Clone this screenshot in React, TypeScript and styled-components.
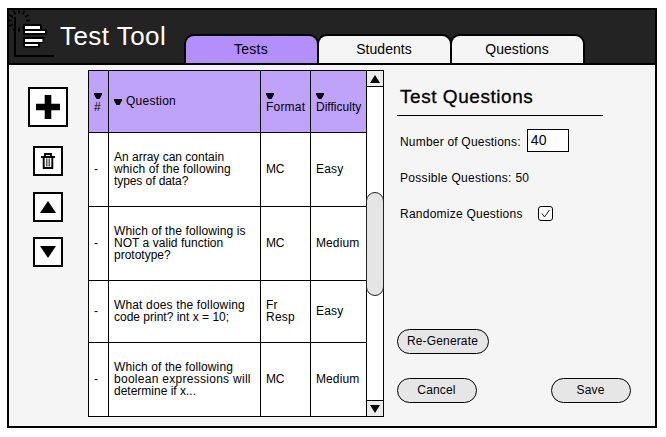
import React, { useState } from "react";
import styled, { createGlobalStyle } from "styled-components";

const Global = createGlobalStyle`
  * { box-sizing: border-box; }
  body { margin: 0; background: #fff; color: #000; font-family: "Liberation Sans", Arial, sans-serif; font-size: 12px; }
  svg { display: block; flex: none; }
`;

const Frame = styled.div`
  width: 650px;
  height: 420px;
  margin: 8px 0 0 7px;
  border: 2px solid #000;
  background: #f5f5f5;
  display: flex;
  flex-direction: column;
`;

const Header = styled.header`
  height: 55px;
  flex: none;
  display: flex;
  background: #232323;
  border-bottom: 2px solid #000;
`;

const AppTitle = styled.h1`
  margin: 0 0 0 5px;
  width: 124px;
  font-size: 26px;
  font-weight: 400;
  line-height: 52px;
  color: #fff;
  white-space: nowrap;
  letter-spacing: 0.45px;
`;

const TabList = styled.nav`
  display: flex;
  align-items: flex-end;
`;

const Tab = styled.button<{ $active?: boolean; $track: number }>`
  width: 135px;
  height: 29px;
  margin: 0 -2px 0 0;
  padding: 0 1px 1px 0;
  border: 2px solid #000;
  border-bottom: 0;
  border-radius: 10px 10px 0 0;
  background: ${(p) => (p.$active ? "#b28ffa" : "#f5f5f5")};
  color: #000;
  font: 14px "Liberation Sans", Arial, sans-serif;
  letter-spacing: ${(p) => p.$track}px;
`;

const Body = styled.main`
  flex: 1;
  display: flex;
`;

const Toolbar = styled.div`
  width: 79px;
  padding: 22px 1px 0 0;
  display: flex;
  flex-direction: column;
  align-items: center;
`;

const ToolButton = styled.button<{ $size: number; $gap: number }>`
  width: ${(p) => p.$size}px;
  height: ${(p) => p.$size}px;
  margin: 0 0 ${(p) => p.$gap}px;
  padding: 0;
  border: 2px solid #000;
  background: #fff;
  display: flex;
  align-items: center;
  justify-content: center;
`;

const TablePane = styled.section`
  width: 296px;
  height: 347px;
  margin-top: 5px;
  border: 1px solid #000;
  background: #fff;
  display: flex;
`;

const Grid = styled.div`
  width: 278px;
  flex: none;
`;

const Row = styled.div<{ $height: number; $head?: boolean }>`
  display: grid;
  grid-template-columns: 20px 152px 50px 56px;
  height: ${(p) => p.$height}px;
  background: ${(p) => (p.$head ? "#bfa2f9" : "#fff")};
  &:not(:last-child) { border-bottom: 1px solid #000; }
`;

const Cell = styled.div`
  border-right: 1px solid #000;
  padding: 0 0 2px 5px;
  display: flex;
  flex-direction: column;
  justify-content: center;
  align-items: flex-start;
  min-width: 0;
`;

const HeadCell = styled(Cell)`
  padding-bottom: 0;
  padding-top: 3px;
  gap: 2px;
`;

const WideHeadCell = styled(Cell)`
  flex-direction: row;
  justify-content: flex-start;
  align-items: center;
  gap: 4px;
  svg { margin-top: 3px; }
`;

const Line = styled.span<{ $track?: number }>`
  line-height: 12px;
  white-space: nowrap;
  letter-spacing: ${(p) => p.$track ?? 0.2}px;
`;

const Scroll = styled.div`
  width: 16px;
  display: flex;
  flex-direction: column;
`;

const ScrollArrow = styled.button<{ $down?: boolean }>`
  height: 16px;
  flex: none;
  padding: 0;
  border: 0 solid #000;
  border-width: ${(p) => (p.$down ? "1px 0 0" : "0 0 1px")};
  background: #ececec;
  display: flex;
  align-items: center;
  justify-content: center;
`;

const Track = styled.div`
  flex: 1;
  padding-top: 105px;
`;

const Thumb = styled.div`
  width: 18px;
  height: 104px;
  margin-left: -1px;
  border: 1px solid #222;
  border-radius: 9px;
  background: #e5e5e5;
`;

const Panel = styled.section`
  width: 206px;
  margin-left: 13px;
  display: flex;
  flex-direction: column;
`;

const PanelTitle = styled.h2`
  margin: 0;
  height: 51px;
  flex: none;
  padding: 21px 0 0 3px;
  border-bottom: 1px solid #000;
  font-size: 19px;
  font-weight: 400;
  line-height: 22px;
  letter-spacing: 0.55px;
  -webkit-text-stroke: 0.3px #000;
`;

const Field = styled.label<{ $height: number }>`
  height: ${(p) => p.$height}px;
  flex: none;
  padding-left: 3px;
  display: flex;
  align-items: center;
`;

const CountInput = styled.input`
  width: 42px;
  height: 23px;
  margin: -3px 0 0 6px;
  padding: 0 3px 1px;
  border: 1px solid #000;
  border-radius: 0;
  background: #fff;
  font: 14px "Liberation Sans", Arial, sans-serif;
  letter-spacing: 0.2px;
`;

const Check = styled.span`
  width: 15px;
  height: 15px;
  margin: -2px 0 0 15px;
  border: 1px solid #000;
  border-radius: 3px;
  background: #fff;
`;

const Actions = styled.div`
  width: 234px;
  margin-top: 24px;
  display: flex;
  justify-content: space-between;
`;

const Spacer = styled.div`
  height: 89px;
  flex: none;
`;

const Pill = styled.button<{ $width: number }>`
  width: ${(p) => p.$width}px;
  height: 25px;
  flex: none;
  padding: 0 1px 2px 0;
  border: 1px solid #000;
  border-radius: 13px;
  background: #e6e6e6;
  color: #000;
  font: 12px "Liberation Sans", Arial, sans-serif;
  letter-spacing: 0.15px;
`;

const Logo = () => (
  <svg width="46" height="50" viewBox="9 10 46 50">
    <g stroke="#000" strokeWidth="1.8" fill="none">
      <path d="M15 17V56H54" strokeWidth="2" />
      {Array.from({ length: 12 }, (_, i) => (
        <path key={i} d="M19 13.5V9.3" transform={`rotate(${i * 30} 19 20.5)`} />
      ))}
    </g>
    <path d="M23.3 24H41L42 26V29.5H47V34.7H23.3ZM23.3 37H44.7L43 43H39.7V47.5H23.3Z" fill="#000" />
    <path d="M25 26H40V29H25ZM25 31H45V33H25ZM25 39H42.5V42H25ZM25 44H38V46H25Z" fill="#fff" />
  </svg>
);

const Triangle = ({ w, h, up }: { w: number; h: number; up?: boolean }) => (
  <svg width={w} height={h} viewBox="0 0 10 10" preserveAspectRatio="none">
    <path d={up ? "M0 10H10L5 0Z" : "M0 0H10L5 10Z"} />
  </svg>
);

const SortMark = () => (
  <svg width="8" height="6" viewBox="0 0 8 6">
    <path d="M0 0H8V1.5L5.5 6H2.5L0 1.5Z" />
  </svg>
);

const PlusIcon = () => (
  <svg width="24" height="24" viewBox="0 0 24 24">
    <path d="M8.7 0H15.3V8.7H24V15.3H15.3V24H8.7V15.3H0V8.7H8.7Z" />
  </svg>
);

const TrashIcon = () => (
  <svg width="14" height="16" viewBox="0 0 14 16">
    <path d="M4 3.5V1H10V3.5M0 4H14M2.7 4V15H11.3V4" fill="none" stroke="#000" strokeWidth="1.9" />
    <path d="M5.5 5.5V13.5M7 5.5V13.5M8.5 5.5V13.5" stroke="#444" strokeWidth="0.9" />
  </svg>
);

type Piece = [string, number];
const rows: { height: number; question: Piece[]; format: Piece[]; level: Piece }[] = [
  {
    height: 74,
    question: [["An array can contain", 0.0], ["which of the following", 0.13], ["types of data?", -0.08]],
    format: [["MC", -0.2]],
    level: ["Easy", 0.2],
  },
  {
    height: 74,
    question: [["Which of the following is", 0.12], ["NOT a valid function", 0.04], ["prototype?", 0]],
    format: [["MC", -0.2]],
    level: ["Medium", 0.1],
  },
  {
    height: 62,
    question: [["What does the following", 0.15], ["code print? int x = 10;", 0]],
    format: [["Fr", 0.2], ["Resp", 0.25]],
    level: ["Easy", 0.2],
  },
  {
    height: 73,
    question: [["Which of the following", 0.1], ["boolean expressions will", 0.28], ["determine if x...", 0]],
    format: [["MC", -0.2]],
    level: ["Medium", 0.1],
  },
];

const Lines = ({ items }: { items: Piece[] }) => (
  <>
    {items.map(([text, track]) => (
      <Line key={text} $track={track}>{text}</Line>
    ))}
  </>
);

export default function App() {
  const [count, setCount] = useState("40");
  return (
    <>
      <Global />
      <Frame>
        <Header>
          <Logo />
          <AppTitle>Test Tool</AppTitle>
          <TabList>
            <Tab $active $track={0.3}>Tests</Tab>
            <Tab $track={0.05}>Students</Tab>
            <Tab $track={0.05}>Questions</Tab>
          </TabList>
        </Header>
        <Body>
          <Toolbar>
            <ToolButton $size={40} $gap={19} aria-label="Add"><PlusIcon /></ToolButton>
            <ToolButton $size={30} $gap={16} aria-label="Delete"><TrashIcon /></ToolButton>
            <ToolButton $size={30} $gap={15} aria-label="Move up"><Triangle w={16} h={12} up /></ToolButton>
            <ToolButton $size={30} $gap={0} aria-label="Move down"><Triangle w={16} h={12} /></ToolButton>
          </Toolbar>
          <TablePane>
            <Grid>
              <Row $height={62} $head>
                <HeadCell><SortMark /><Line>#</Line></HeadCell>
                <WideHeadCell><SortMark /><Line $track={0.25}>Question</Line></WideHeadCell>
                <HeadCell><SortMark /><Line $track={0.2}>Format</Line></HeadCell>
                <HeadCell><SortMark /><Line $track={0.02}>Difficulty</Line></HeadCell>
              </Row>
              {rows.map((r, i) => (
                <Row key={i} $height={r.height}>
                  <Cell><Line>-</Line></Cell>
                  <Cell><Lines items={r.question} /></Cell>
                  <Cell><Lines items={r.format} /></Cell>
                  <Cell><Lines items={[r.level]} /></Cell>
                </Row>
              ))}
            </Grid>
            <Scroll>
              <ScrollArrow aria-label="Scroll up"><Triangle w={10} h={8} up /></ScrollArrow>
              <Track><Thumb /></Track>
              <ScrollArrow $down aria-label="Scroll down"><Triangle w={10} h={8} /></ScrollArrow>
            </Scroll>
          </TablePane>
          <Panel>
            <PanelTitle>Test Questions</PanelTitle>
            <Field $height={52}>
              <Line>Number of Questions:</Line>
              <CountInput value={count} onChange={(e) => setCount(e.target.value)} />
            </Field>
            <Field $height={20}><Line $track={0.3}>Possible Questions: 50</Line></Field>
            <Field $height={52}>
              <Line $track={0.24}>Randomize Questions</Line>
              <Check>
                <svg width="13" height="13" viewBox="0 0 13 13">
                  <path d="M3 6.5L5.5 10L10.5 3" fill="none" stroke="#000" strokeWidth="0.9" />
                </svg>
              </Check>
            </Field>
            <Spacer />
            <Pill $width={92}>Re-Generate</Pill>
            <Actions>
              <Pill $width={80}>Cancel</Pill>
              <Pill $width={80}>Save</Pill>
            </Actions>
          </Panel>
        </Body>
      </Frame>
    </>
  );
}
